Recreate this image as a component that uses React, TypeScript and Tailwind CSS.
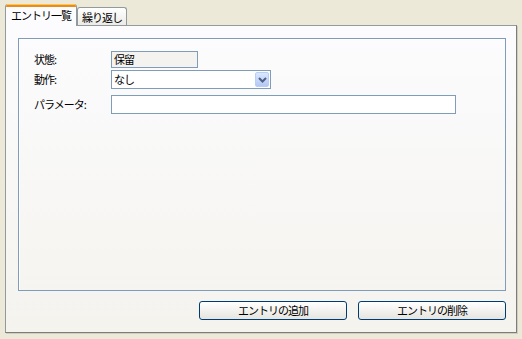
import React from 'react';

const font = { fontFamily: '"Noto Sans CJK JP", "Noto Sans", sans-serif' };

const App: React.FC = () => {
  return (
    <div className='w-[522px] h-[339px] bg-[#ECE9D8] pt-[4px] px-[5px] text-[11px] tracking-[-1px] leading-none text-black whitespace-nowrap' style={font}>
      {/* tabs */}
      <div className='flex items-end h-[21px]'>
        <div className='relative z-10 -mb-px h-[22px] w-[72px] bg-[#FCFCFE] border-x border-[#919B9C] rounded-t-[3px] overflow-hidden flex flex-col'>
          <div className='h-[3px] bg-[#E68B2C] border-t border-[#FFC83C]'></div>
          <div className='flex-1 flex items-center justify-center pb-[2px]'>エントリ一覧</div>
        </div>
        <div className='h-[18px] w-[50px] border border-b-0 border-[#919B9C] rounded-t-[3px] bg-gradient-to-b from-white to-[#ECEBE6] flex items-center justify-center pt-[1px]'>
          繰り返し
        </div>
      </div>

      {/* panel */}
      <div className='h-[308px] w-[512px] border border-[#919B9C] border-r-[#7C7C7C] border-b-[#7C7C7C] bg-gradient-to-b from-[#FCFCFE] to-[#F4F3EE] pt-[12px] pl-[12px] pr-[10px] flex flex-col shadow-[1px_1px_0_#D0CEBF]'>
        <div className='h-[253px] border border-[#7F9DB9] shadow-[inset_1px_1px_0_#fff] pt-[12px] pl-[15px] flex flex-col'>
          <div className='flex items-center h-[17px]'>
            <span className='w-[77px]'>状態:</span>
            <div className='w-[87px] h-[17px] border border-[#7F9DB9] bg-[#F4F3EF] flex items-center pl-[2px]'>保留</div>
          </div>
          <div className='flex items-center h-[19px] mt-[2px]'>
            <span className='w-[77px]'>動作:</span>
            <div className='w-[160px] h-[19px] border border-[#7F9DB9] bg-white flex items-center pl-[2px] pr-[1px]'>
              <span className='flex-1'>なし</span>
              <div className='w-[14px] h-[15px] rounded-[2px] bg-gradient-to-b from-[#DCE7FD] to-[#B4C8F6] border border-[#B9CEF7] flex items-center justify-center'>
                <svg width='9' height='6' viewBox='0 0 9 6'>
                  <path d='M1 1 L4.5 4.5 L8 1' stroke='#4D6185' strokeWidth='2' fill='none' />
                </svg>
              </div>
            </div>
          </div>
          <div className='flex items-center h-[19px] mt-[6px]'>
            <span className='w-[77px]'>パラメータ:</span>
            <div className='w-[345px] h-[19px] border border-[#7F9DB9] bg-white'></div>
          </div>
        </div>
        <div className='flex justify-end gap-[11px] mt-[10px]'>
          <button className='w-[148px] h-[19px] rounded-[3px] border border-[#003C74] bg-gradient-to-b from-white to-[#E6E5DF] flex items-center justify-center tracking-[-1px]' style={font}>
            エントリの追加
          </button>
          <button className='w-[148px] h-[19px] rounded-[3px] border border-[#003C74] bg-gradient-to-b from-white to-[#E6E5DF] flex items-center justify-center tracking-[-1px]' style={font}>
            エントリの削除
          </button>
        </div>
      </div>
    </div>
  );
};

export default App;
